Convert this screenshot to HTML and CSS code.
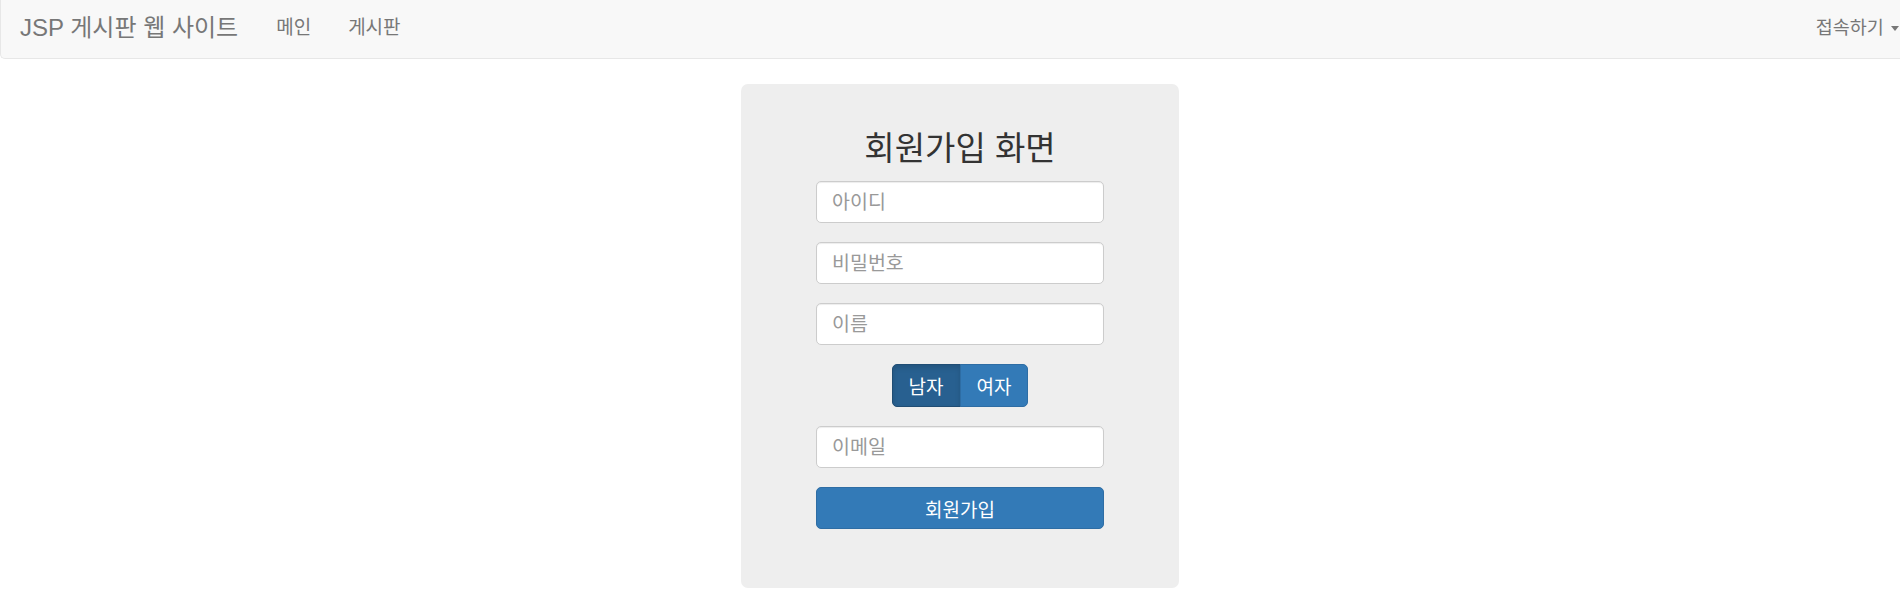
FILE: index.html
```html
<!DOCTYPE html>
<html lang="ko">
<head>
    <meta charset="UTF-8">
    <meta name="viewport" content="width=device-width, initial-scale=1.0">
    <title>JSP 게시판 웹 사이트</title>
    <link rel="stylesheet" href="styles.css">
</head>
<body>
    <!-- Top navigation -->
    <nav class="navbar">
        <div class="navbar-left">
            <a class="brand" href="#">JSP 게시판 웹 사이트</a>
            <ul class="nav">
                <li><a href="#">메인</a></li>
                <li><a href="#">게시판</a></li>
            </ul>
        </div>
        <ul class="nav nav-right">
            <li><a href="#">접속하기 <span class="caret"></span></a></li>
        </ul>
    </nav>

    <!-- Join form -->
    <div class="jumbotron">
        <form class="join-form">
            <h3>회원가입 화면</h3>
            <input type="text" class="form-control" placeholder="아이디">
            <input type="password" class="form-control" placeholder="비밀번호">
            <input type="text" class="form-control" placeholder="이름">
            <div class="btn-group">
                <label class="btn btn-primary active">남자</label>
                <label class="btn btn-primary">여자</label>
            </div>
            <input type="email" class="form-control" placeholder="이메일">
            <button type="submit" class="btn btn-primary btn-block">회원가입</button>
        </form>
    </div>
</body>
</html>
```

FILE: styles.css
```css
body {
    margin: 0;
    overflow-x: hidden;
    font-family: "Liberation Sans", "Noto Sans CJK KR", sans-serif;
    color: #333;
    background: #fff;
}
a {
    text-decoration: none;
}
.navbar {
    display: flex;
    justify-content: space-between;
    align-items: center;
    height: 59px;
    padding-bottom: 7px;
    box-sizing: border-box;
    background: #f8f8f8;
    border-bottom: 1px solid #e7e7e7;
    border-left: 1px solid #e7e7e7;
    border-bottom-left-radius: 5px;
}
.navbar-left {
    display: flex;
    align-items: center;
}
.brand {
    padding-left: 19px;
    font-size: 24px;
    color: #777;
}
.nav {
    display: flex;
    list-style: none;
    margin: 0;
    padding: 0;
}
.nav a {
    display: block;
    font-size: 19px;
    color: #777;
}
.navbar-left .nav {
    margin-left: 38px;
    gap: 37px;
}
.nav-right a {
    padding-right: 1px;
    font-size: 18.5px;
}
.caret {
    display: inline-block;
    width: 0;
    height: 0;
    margin-left: 2px;
    vertical-align: middle;
    border-top: 5px solid #777;
    border-left: 4.5px solid transparent;
    border-right: 4.5px solid transparent;
}
.jumbotron {
    width: 438px;
    margin: 25px 0 0 calc(50% - 209px);
    padding: 48px 75px 59px;
    box-sizing: border-box;
    background: #eee;
    border-radius: 7px;
}
.join-form {
    display: flex;
    flex-direction: column;
    align-items: center;
    gap: 19px;
}
.join-form h3 {
    margin: 0 0 -4px;
    font-size: 33px;
    font-weight: 400;
    line-height: 34px;
    color: #333;
}
.form-control {
    width: 100%;
    height: 42px;
    padding: 0 15px;
    box-sizing: border-box;
    font-family: inherit;
    font-size: 19.5px;
    color: #555;
    background: #fff;
    border: 1px solid #ccc;
    border-radius: 5px;
    box-shadow: inset 0 1px 1px rgba(0, 0, 0, .075);
}
.form-control::placeholder {
    color: #999;
}
.btn {
    display: inline-flex;
    align-items: center;
    justify-content: center;
    height: 43px;
    padding: 0 16px;
    box-sizing: border-box;
    font-family: inherit;
    font-size: 19px;
    color: #fff;
    border: 1px solid transparent;
    border-radius: 5px;
    cursor: pointer;
}
.btn-primary {
    background: #337ab7;
    border-color: #2e6da4;
}
.btn-primary.active {
    background: #286090;
    border-color: #204d74;
    box-shadow: inset 0 3px 5px rgba(0, 0, 0, .125);
}
.btn-group {
    display: flex;
}
.btn-group .btn:first-child {
    border-top-right-radius: 0;
    border-bottom-right-radius: 0;
}
.btn-group .btn + .btn {
    margin-left: -1px;
    border-top-left-radius: 0;
    border-bottom-left-radius: 0;
}
.btn-block {
    width: 100%;
    height: 42px;
}
```
